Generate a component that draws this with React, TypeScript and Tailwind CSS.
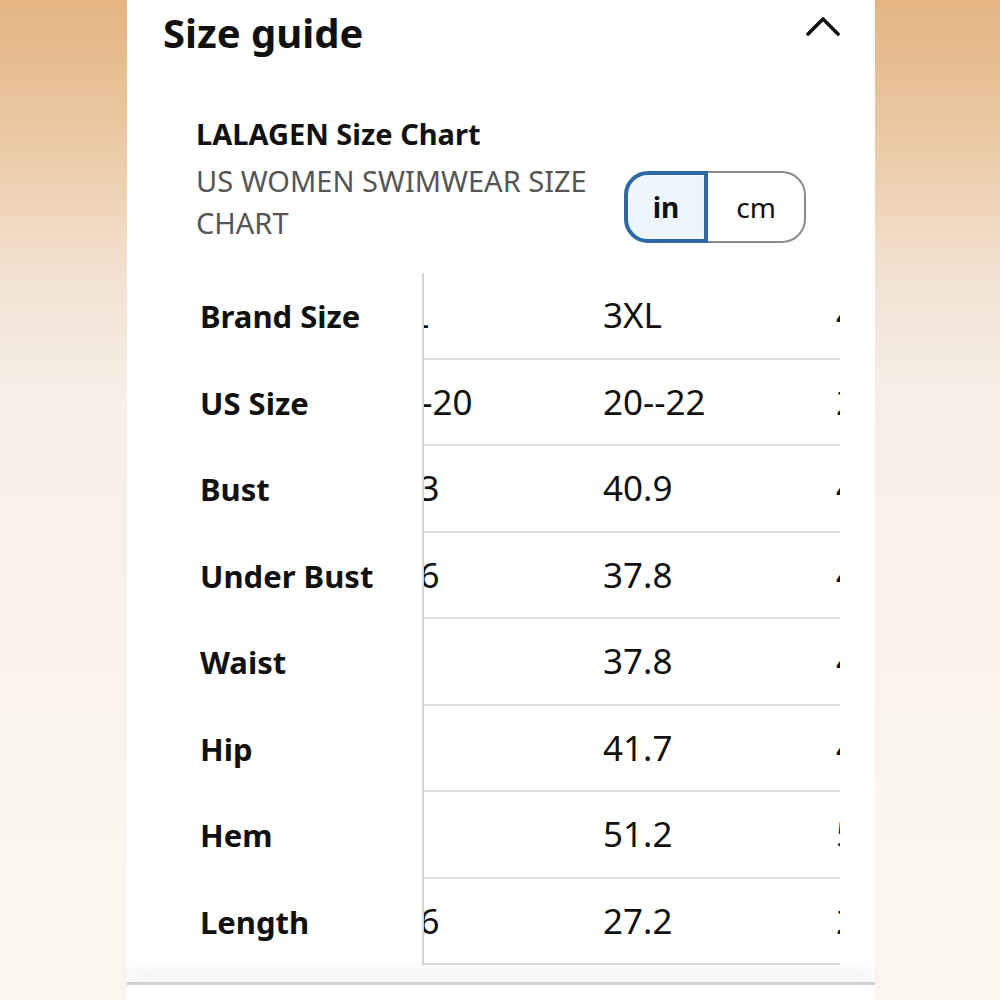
import { useLayoutEffect, useRef } from 'react';

const sizes = ['S', 'M', 'L', 'XL', '2XL', '3XL', '4XL', '5XL'];

const rows: { label: string; values: string[] }[] = [
  { label: 'Brand Size', values: sizes },
  { label: 'US Size', values: ['4--6', '8--10', '12--14', '14--16', '18--20', '20--22', '22--24', '24--26'] },
  { label: 'Bust', values: ['33.1', '34.6', '36.2', '37.8', '39.3', '40.9', '42.5', '44.1'] },
  { label: 'Under Bust', values: ['31.5', '33.1', '34.6', '35.4', '36.6', '37.8', '40.6', '42.1'] },
  { label: 'Waist', values: ['29.9', '31.5', '33.1', '34.6', '36', '37.8', '40.9', '42.5'] },
  { label: 'Hip', values: ['35.4', '37', '38.6', '39.4', '40', '41.7', '44.1', '45.7'] },
  { label: 'Hem', values: ['44.9', '46.5', '48', '48.8', '50', '51.2', '53.5', '55.1'] },
  { label: 'Length', values: ['25.2', '25.6', '26', '26.4', '26.6', '27.2', '27.6', '28'] },
];

function ChevronUp() {
  return (
    <svg width="34" height="20" viewBox="0 0 34 20" fill="none">
      <polyline points="2,18 17,3 32,18" stroke="#111" strokeWidth="3.6" strokeLinecap="round" strokeLinejoin="round" />
    </svg>
  );
}

function UnitToggle() {
  return (
    <div className="flex h-[72px] w-[182px] shrink-0">
      <div className="flex w-[84px] items-center justify-center rounded-l-[24px] border-[4px] border-[#2e69a6] bg-[#eef6fc] text-[28px] font-bold text-[#111]">
        in
      </div>
      <div className="flex flex-1 items-center justify-center rounded-r-[24px] border-y-2 border-r-2 border-[#8a8a8a] text-[28px] text-[#111]">
        cm
      </div>
    </div>
  );
}

function SizeTable() {
  const scroller = useRef<HTMLDivElement>(null);

  useLayoutEffect(() => {
    if (scroller.current) scroller.current.scrollLeft = 1002;
  }, []);

  return (
    <div className="flex">
      <div className="w-[261px] shrink-0 border-r-2 border-[#d6d6d6] bg-white">
        {rows.map((row) => (
          <div key={row.label} className="flex h-[86.5px] items-center pl-[37px] text-[31px] font-bold text-[#111]">
            {row.label}
          </div>
        ))}
      </div>
      <div ref={scroller} className="flex-1 overflow-hidden">
        <div className="w-max">
          {rows.map((row) => (
            <div key={row.label} className="flex h-[86.5px] border-b-2 border-[#dedede]">
              {row.values.map((v, i) => (
                <div key={i} className="flex w-[233px] items-center px-4 text-[35px] text-[#111]">
                  {v}
                </div>
              ))}
            </div>
          ))}
        </div>
      </div>
    </div>
  );
}

export default function App() {
  return (
    <div className="flex h-[1000px] w-full justify-center bg-[linear-gradient(to_bottom,#e4b582_0%,#ebc9a4_14%,#f2e1d0_27%,#f7efe7_40%,#fcf8f1_100%)] font-['Noto_Sans',sans-serif]">
      <div className="ml-[2px] flex h-full w-[748px] flex-col bg-white">
        <div className="flex-1 overflow-hidden pl-[36px] pr-[35px]">
          <div className="flex h-[66px] items-center justify-between">
            <h2 className="text-[40px] font-bold leading-none text-[#111]">Size guide</h2>
            <div className="mt-[16px] self-start">
              <ChevronUp />
            </div>
          </div>

          <div className="mt-[42px] flex items-start justify-between pl-[33px] pr-[34px]">
            <div className="w-[410px]">
              <h3 className="text-[29px] font-bold leading-[52px] text-[#111]">LALAGEN Size Chart</h3>
              <p className="text-[29px] leading-[42px] text-[#555]">US WOMEN SWIMWEAR SIZE CHART</p>
            </div>
            <div className="mt-[63px]">
              <UnitToggle />
            </div>
          </div>

          <div className="mt-[29px]">
            <SizeTable />
          </div>
        </div>

        <div className="relative h-[18px] shrink-0 border-t-[3px] border-[#cdd2d4] bg-white shadow-[0_-12px_18px_rgba(0,0,0,0.05)]" />
      </div>
    </div>
  );
}
